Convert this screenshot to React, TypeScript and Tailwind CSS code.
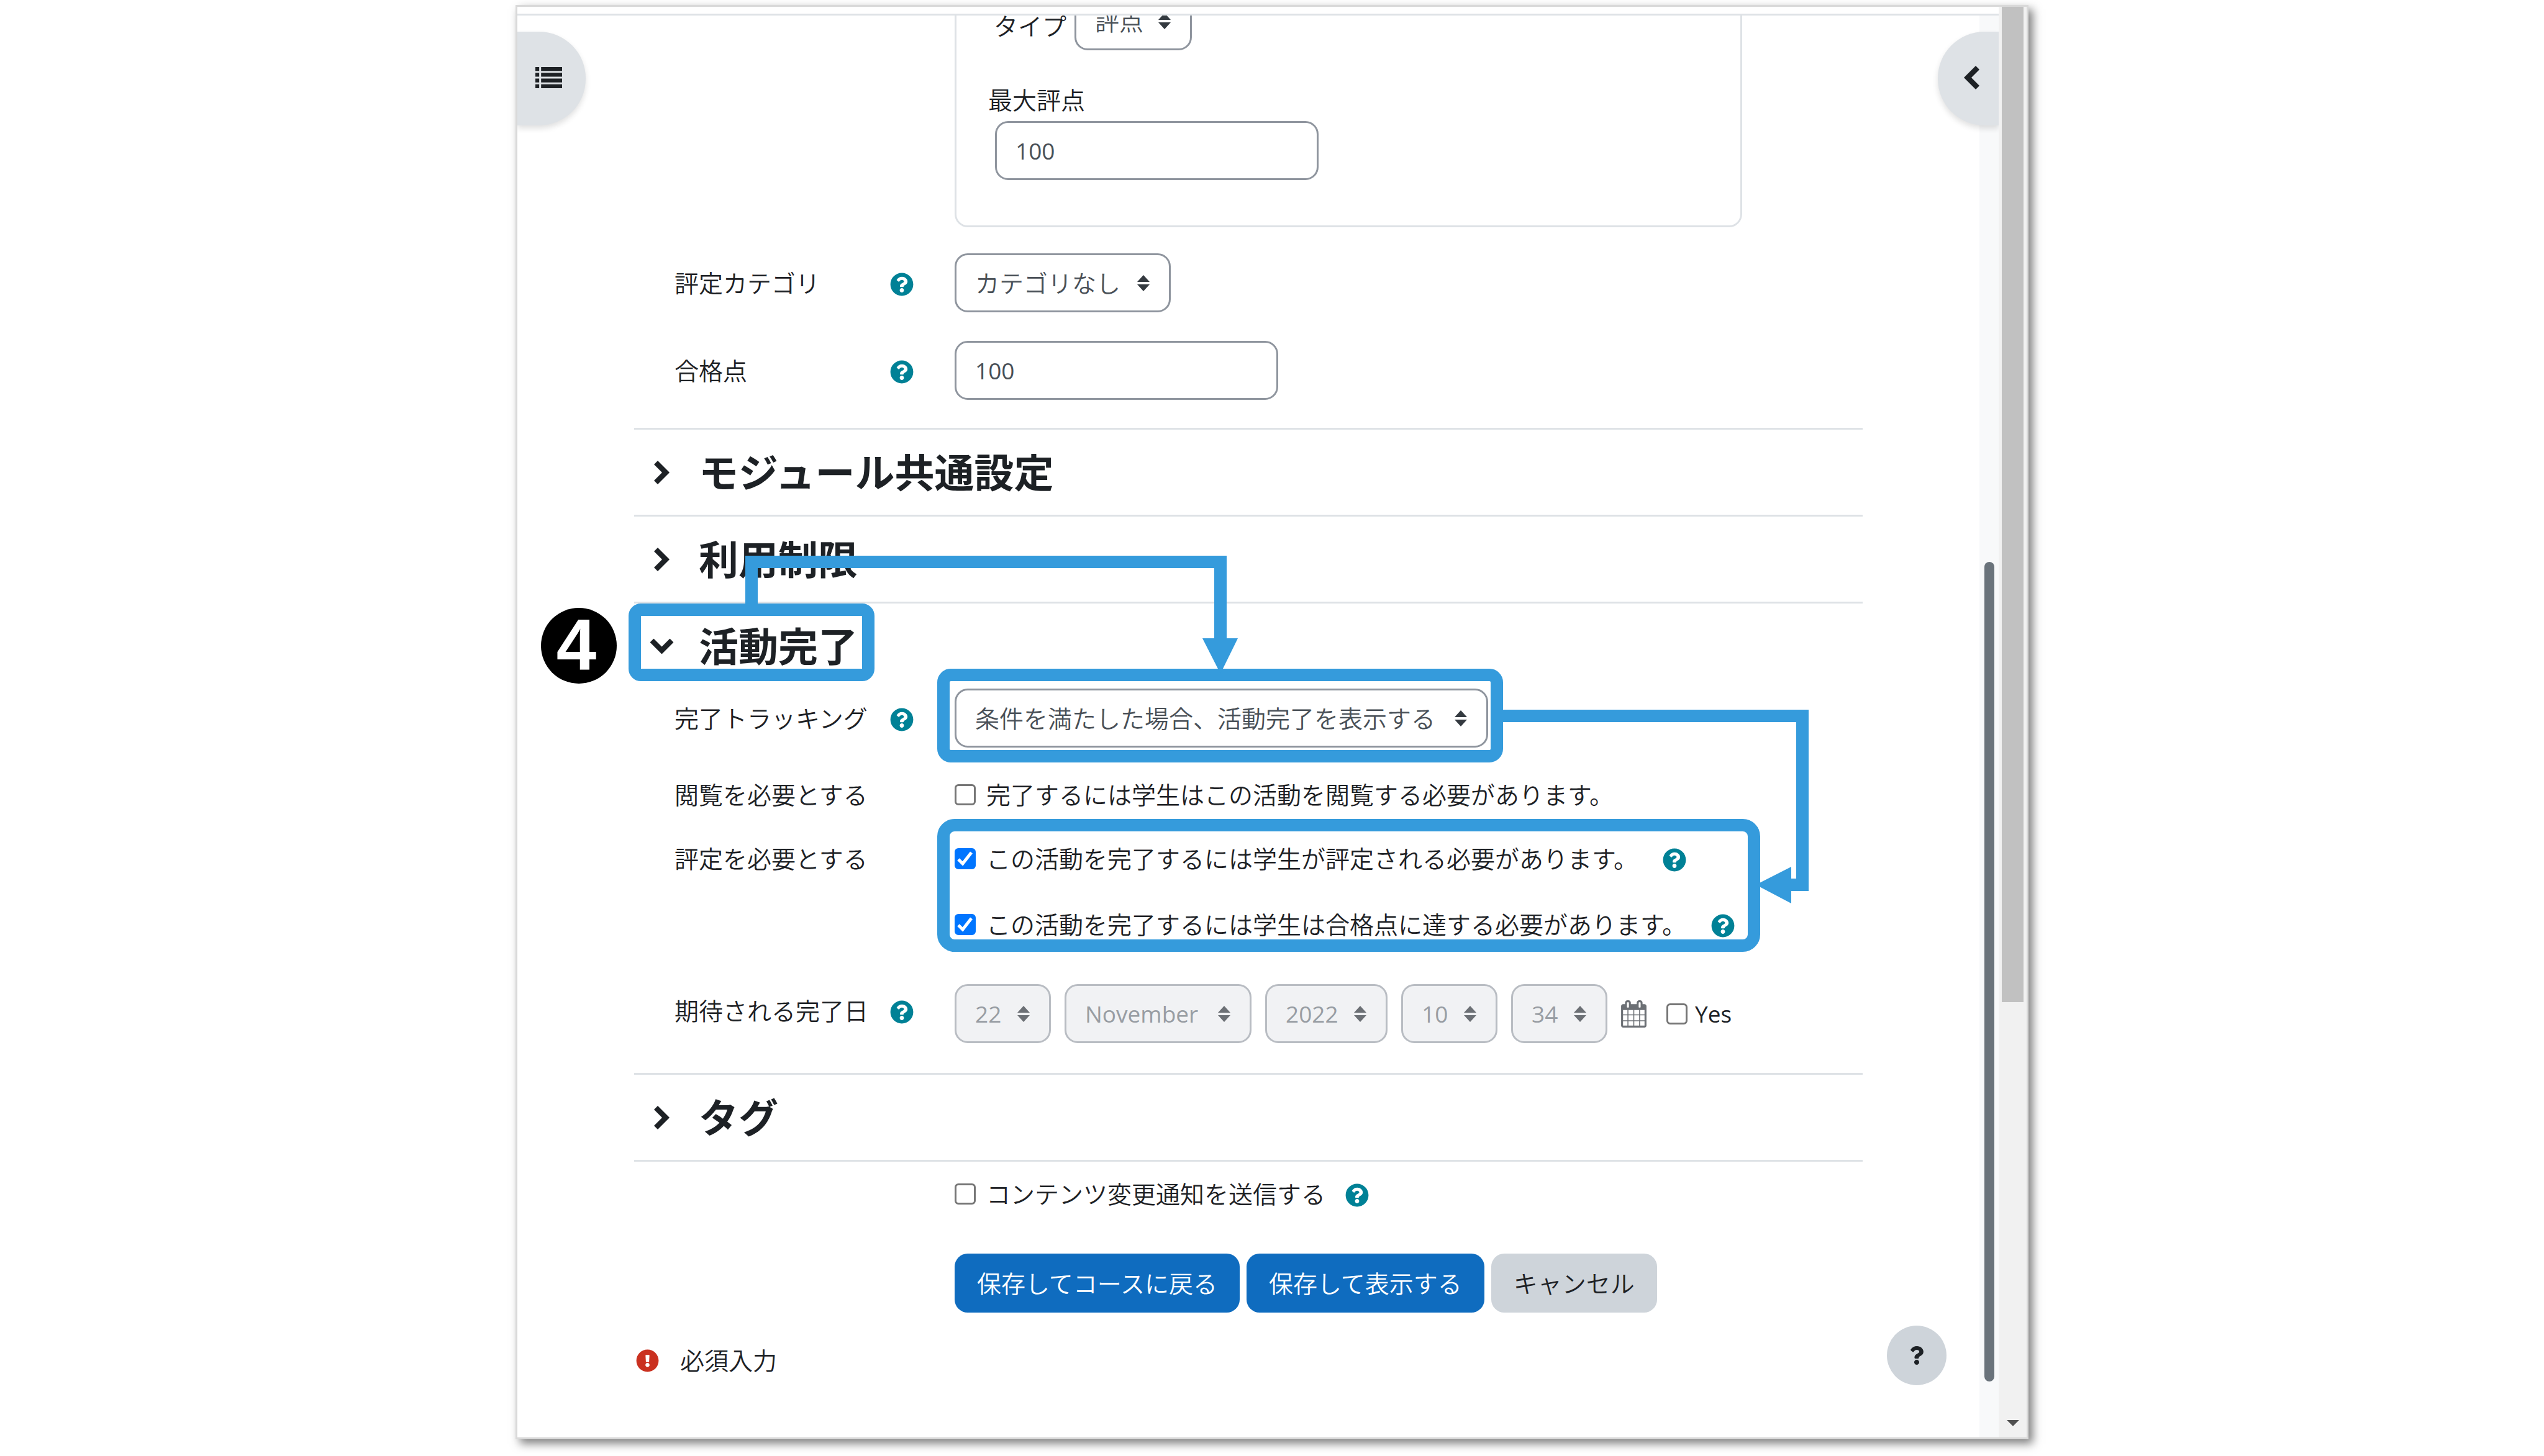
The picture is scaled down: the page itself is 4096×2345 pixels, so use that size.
import { useId } from "react";
import type { ReactNode } from "react";
import { FaExclamationCircle, FaQuestion, FaQuestionCircle } from "react-icons/fa";

function HelpButton({ label }: { label: string }) {
  return (
    <button type="button" aria-label={`${label} ヘルプ`} className="shrink-0 pt-1 text-[#008196]">
      <FaQuestionCircle className="size-[38px]" />
    </button>
  );
}

function SortArrows() {
  return (
    <svg viewBox="0 0 20 26" className="h-[26px] w-5" fill="currentColor" aria-hidden="true">
      <path d="M10 0 20 11H0zM10 26 0 15h20z" />
    </svg>
  );
}

function Select({
  id,
  label,
  value,
  width,
  latin = false,
  disabled = false,
}: {
  id?: string;
  label?: string;
  value: string;
  width: string;
  latin?: boolean;
  disabled?: boolean;
}) {
  return (
    <div className={`relative h-[95px] shrink-0 ${width} ${disabled ? "text-[#6c7075]" : "text-[#343a40]"}`}>
      <select
        id={id}
        aria-label={label}
        disabled={disabled}
        defaultValue={value}
        className={`size-full appearance-none rounded-[21px] border-[3px] pl-[30px] opacity-100 ${
          latin ? "text-[37px] font-normal" : "text-[39px]"
        } ${
          disabled ? "border-[#b9bdc3] bg-[#f1f2f4] text-[#989da3]" : "border-[#8f959e] bg-white text-[#495057]"
        }`}
      >
        <option>{value}</option>
      </select>
      <span className="pointer-events-none absolute inset-y-0 right-[34px] flex items-center">
        <SortArrows />
      </span>
    </div>
  );
}

function NumberInput({ id }: { id: string }) {
  return (
    <input
      id={id}
      type="text"
      defaultValue="100"
      className="h-[95px] w-[521px] rounded-[21px] border-[3px] border-[#8f959e] bg-white px-[30px] text-[37px] font-normal text-[#495057]"
    />
  );
}

function Check({ label, checked = false, latin = false }: { label: string; checked?: boolean; latin?: boolean }) {
  const id = useId();
  return (
    <div className={`flex items-center ${latin ? "gap-3" : "gap-[17px]"}`}>
      <span className="grid size-[34px] shrink-0">
        <input
          id={id}
          type="checkbox"
          defaultChecked={checked}
          className="peer col-start-1 row-start-1 size-[34px] appearance-none rounded-[6px] border-[3px] border-[#767676] bg-white checked:border-[#0075ff] checked:bg-[#0075ff]"
        />
        <svg
          viewBox="0 0 34 34"
          className="pointer-events-none invisible col-start-1 row-start-1 size-[34px] peer-checked:visible"
          fill="none"
          stroke="white"
          strokeWidth="5"
          aria-hidden="true"
        >
          <path d="M6 18 13 25 27 7" />
        </svg>
      </span>
      <label htmlFor={id} className={latin ? "text-[37px] font-normal" : ""}>
        {label}
      </label>
    </div>
  );
}

function Row({
  label,
  htmlFor,
  help = false,
  labelHeight = "h-14",
  children,
}: {
  label?: string;
  htmlFor?: string;
  help?: boolean;
  labelHeight?: string;
  children: ReactNode;
}) {
  return (
    <div className="flex items-start">
      <div
        className={`flex w-[516px] shrink-0 items-center justify-between pr-[66px] pl-[65px] ${labelHeight}`}
      >
        {htmlFor ? <label htmlFor={htmlFor}>{label}</label> : <span>{label}</span>}
        {help && label && <HelpButton label={label} />}
      </div>
      <div className="min-w-0 flex-1">{children}</div>
    </div>
  );
}

function SectionHeader({ title, open = false }: { title: string; open?: boolean }) {
  return (
    <div className="border-t-[3px] border-[#dee2e6]">
      <button
        type="button"
        aria-expanded={open}
        className="flex h-[137px] items-center gap-[41px] pl-[26px] text-[64px] font-bold"
      >
        <span className="flex w-[37px] justify-center">
          <svg viewBox="0 0 25 38" className={`h-[38px] w-[25px] ${open ? "rotate-90" : ""}`} fill="currentColor" aria-hidden="true">
            <path d="M0 6 6 0 25 19 6 38 0 32 13 19z" />
          </svg>
        </span>
        <h3>{title}</h3>
      </button>
    </div>
  );
}

function StepAnnotations() {
  return (
    <>
      <svg
        className="pointer-events-none absolute top-0 left-0 h-[600px] w-[1900px] overflow-visible"
        fill="none"
        stroke="#359bdc"
        strokeWidth="20"
        aria-hidden="true"
      >
        <rect x="1" y="13" width="376" height="105" rx="10" />
        <rect x="498" y="118" width="891" height="131" rx="12" />
        <rect x="498" y="360" width="1305" height="194" rx="18" />
        <path d="M189 10V-64H944V62" />
        <path d="M1398 184H1881V456H1855" />
        <g fill="#359bdc" stroke="none">
          <path d="M915 59H972L944 116z" />
          <path d="M1863 427V486L1806 456z" />
        </g>
      </svg>
      <div className="absolute top-[10px] -left-[150px] flex size-[122px] items-center justify-center rounded-full bg-black pr-2 pb-1 font-['Liberation_Sans',sans-serif] text-[116px] leading-none font-bold text-white">
        4
      </div>
    </>
  );
}

function CalendarIcon() {
  return (
    <svg viewBox="0 0 1664 1792" className="h-[44px] w-[41px]" fill="currentColor" aria-hidden="true">
      <path d="M128 1664h288v-288h-288v288zm352 0h320v-288h-320v288zm-352-352h288v-320h-288v320zm352 0h320v-320h-320v320zm-352-384h288v-288h-288v288zm736 736h320v-288h-320v288zm-384-736h320v-288h-320v288zm768 736h288v-288h-288v288zm-384-352h320v-320h-320v320zm-352-864v-288q0-13-9.5-22.5t-22.5-9.5h-64q-13 0-22.5 9.5t-9.5 22.5v288q0 13 9.5 22.5t22.5 9.5h64q13 0 22.5-9.5t9.5-22.5zm736 864h288v-320h-288v320zm-384-384h320v-288h-320v288zm384 0h288v-288h-288v288zm32-480v-288q0-13-9.5-22.5t-22.5-9.5h-64q-13 0-22.5 9.5t-9.5 22.5v288q0 13 9.5 22.5t22.5 9.5h64q13 0 22.5-9.5t9.5-22.5zm384-64v1280q0 52-38 90t-90 38h-1408q-52 0-90-38t-38-90v-1280q0-52 38-90t90-38h128v-96q0-66 47-113t113-47h64q66 0 113 47t47 113v96h384v-96q0-66 47-113t113-47h64q66 0 113 47t47 113v96h128q52 0 90 38t38 90z" />
    </svg>
  );
}

function ActionButton({ label, primary = false }: { label: string; primary?: boolean }) {
  return (
    <button
      type="button"
      className={`h-[95px] rounded-[21px] px-9 ${
        primary ? "bg-[#0f6cbf] text-white" : "bg-[#ced4da] text-[#1d2125]"
      }`}
    >
      {label}
    </button>
  );
}

function SettingsForm() {
  return (
    <form className="min-w-0 flex-1 px-[188px] pb-24">
      <fieldset className="mr-[194px] ml-[516px] rounded-b-[21px] border-[3px] border-t-0 border-[#dee2e6] pb-[73px]">
        <div className="-mt-[39px] flex items-center gap-[13px] pl-[60px]">
          <label htmlFor="grade-type" className="pt-4 leading-none">
            タイプ
          </label>
          <Select id="grade-type" value="評点" width="w-[189px]" />
        </div>
        <div className="mt-[52px] flex h-14 items-center pl-[51px]">
          <label htmlFor="grade-max">最大評点</label>
        </div>
        <div className="mt-[6px] flex pl-[62px]">
          <NumberInput id="grade-max" />
        </div>
      </fieldset>

      <div className="mt-[42px] mb-[45px] flex flex-col gap-[46px]">
        <Row label="評定カテゴリ" htmlFor="grade-category" help labelHeight="h-[95px]">
          <Select id="grade-category" value="カテゴリなし" width="w-[348px]" />
        </Row>
        <Row label="合格点" htmlFor="grade-pass" help labelHeight="h-[95px]">
          <div className="flex">
            <NumberInput id="grade-pass" />
          </div>
        </Row>
      </div>

      <SectionHeader title="モジュール共通設定" />
      <SectionHeader title="利用制限" />

      <section className="relative pb-12">
        <SectionHeader title="活動完了" open />
        <Row label="完了トラッキング" htmlFor="completion" help labelHeight="h-[95px]">
          <Select id="completion" value="条件を満たした場合、活動完了を表示する" width="w-[859px]" />
        </Row>
        <div className="mt-12 flex flex-col gap-[47px]">
          <Row label="閲覧を必要とする">
            <Check label="完了するには学生はこの活動を閲覧する必要があります。" />
          </Row>
          <Row label="評定を必要とする">
            <div className="flex flex-col gap-[50px]">
              <div className="flex h-14 items-center gap-10">
                <Check label="この活動を完了するには学生が評定される必要があります。" checked />
                <HelpButton label="評定" />
              </div>
              <div className="flex h-14 items-center gap-10">
                <Check label="この活動を完了するには学生は合格点に達する必要があります。" checked />
                <HelpButton label="合格点" />
              </div>
            </div>
          </Row>
        </div>
        <div className="mt-[68px]">
          <Row label="期待される完了日" help labelHeight="h-[86px]">
            <div className="flex items-center gap-[22px]">
              <Select label="日" value="22" width="w-[155px]" latin disabled />
              <Select label="月" value="November" width="w-[301px]" latin disabled />
              <Select label="年" value="2022" width="w-[197px]" latin disabled />
              <Select label="時" value="10" width="w-[155px]" latin disabled />
              <Select label="分" value="34" width="w-[155px]" latin disabled />
              <div className="flex items-center gap-8">
                <button type="button" aria-label="カレンダー" className="text-[#6c7075]">
                  <CalendarIcon />
                </button>
                <Check label="Yes" latin />
              </div>
            </div>
          </Row>
        </div>
        <StepAnnotations />
      </section>

      <SectionHeader title="タグ" />
      <div className="border-t-[3px] border-[#dee2e6] pt-6">
        <Row>
          <div className="flex h-14 items-center gap-8">
            <Check label="コンテンツ変更通知を送信する" />
            <HelpButton label="コンテンツ変更通知" />
          </div>
        </Row>
        <div className="mt-[68px]">
          <Row>
            <div className="flex gap-[11px]">
              <ActionButton label="保存してコースに戻る" primary />
              <ActionButton label="保存して表示する" primary />
              <ActionButton label="キャンセル" />
            </div>
          </Row>
        </div>
        <div className="mt-[49px] flex h-14 items-center gap-[34px] pl-[3px]">
          <FaExclamationCircle className="size-[37px] text-[#ca3120]" />
          <span>必須入力</span>
        </div>
      </div>
    </form>
  );
}

export default function App() {
  return (
    <div className="bg-white px-[830px] pt-2 pb-7 font-['Open_Sans','Noto_Sans_CJK_JP',sans-serif] text-[39px] leading-[56px] font-[350] text-[#1d2125]">
      <div className="flex border-[3px] border-[#d9d9d9] bg-white shadow-[7px_7px_14px_rgba(0,0,0,0.5)]">
        <div className="flex min-w-0 flex-1 flex-col">
          <div className="h-[14px] border-b-[3px] border-[#dee2e6]" />
          <main className="relative flex flex-1 overflow-hidden">
            <SettingsForm />
            <div className="flex w-[31px] shrink-0 flex-col items-center justify-end bg-[#f8f9fa] pb-[90px]">
              <div className="h-[1320px] w-4 rounded-full bg-[#6a737b]" />
            </div>
            <button
              type="button"
              aria-label="コースインデックスを開く"
              className="absolute top-[26px] left-0 flex h-[151px] w-[110px] items-center rounded-r-[75px] bg-[#dee2e6] pb-[3px] pl-[29px] shadow-[0_5px_10px_rgba(0,0,0,0.12)]"
            >
              <svg viewBox="0 0 1792 1408" className="h-[34px] w-[43px]" fill="currentColor" aria-hidden="true">
                <path d="M0 0h256v256H0zM0 384h256v256H0zM0 768h256v256H0zM0 1152h256v256H0zM384 0h1408v256H384zM384 384h1408v256H384zM384 768h1408v256H384zM384 1152h1408v256H384z" />
              </svg>
            </button>
            <button
              type="button"
              aria-label="ブロックドロワを開く"
              className="absolute top-[26px] right-0 flex h-[151px] w-[98px] items-center rounded-l-[75px] bg-[#dee2e6] pb-[3px] pl-[42px] shadow-[0_5px_10px_rgba(0,0,0,0.12)]"
            >
              <svg viewBox="0 0 25 38" className="h-[38px] w-[25px] rotate-180" fill="currentColor" aria-hidden="true">
                <path d="M0 6 6 0 25 19 6 38 0 32 13 19z" />
              </svg>
            </button>
            <button
              type="button"
              aria-label="フッタを表示する"
              className="absolute right-[84px] bottom-[84px] flex size-24 items-center justify-center rounded-full bg-[#ced4da]"
            >
              <FaQuestion className="size-[30px]" />
            </button>
          </main>
        </div>
        <div className="flex w-[45px] shrink-0 flex-col items-center justify-between bg-[#f1f1f1] pb-[18px]">
          <div className="h-[1603px] w-[35px] bg-[#c1c1c1]" />
          <svg viewBox="0 0 20 10" className="h-[10px] w-5" fill="#505050" aria-hidden="true">
            <path d="M0 0h20L10 10z" />
          </svg>
        </div>
      </div>
    </div>
  );
}
